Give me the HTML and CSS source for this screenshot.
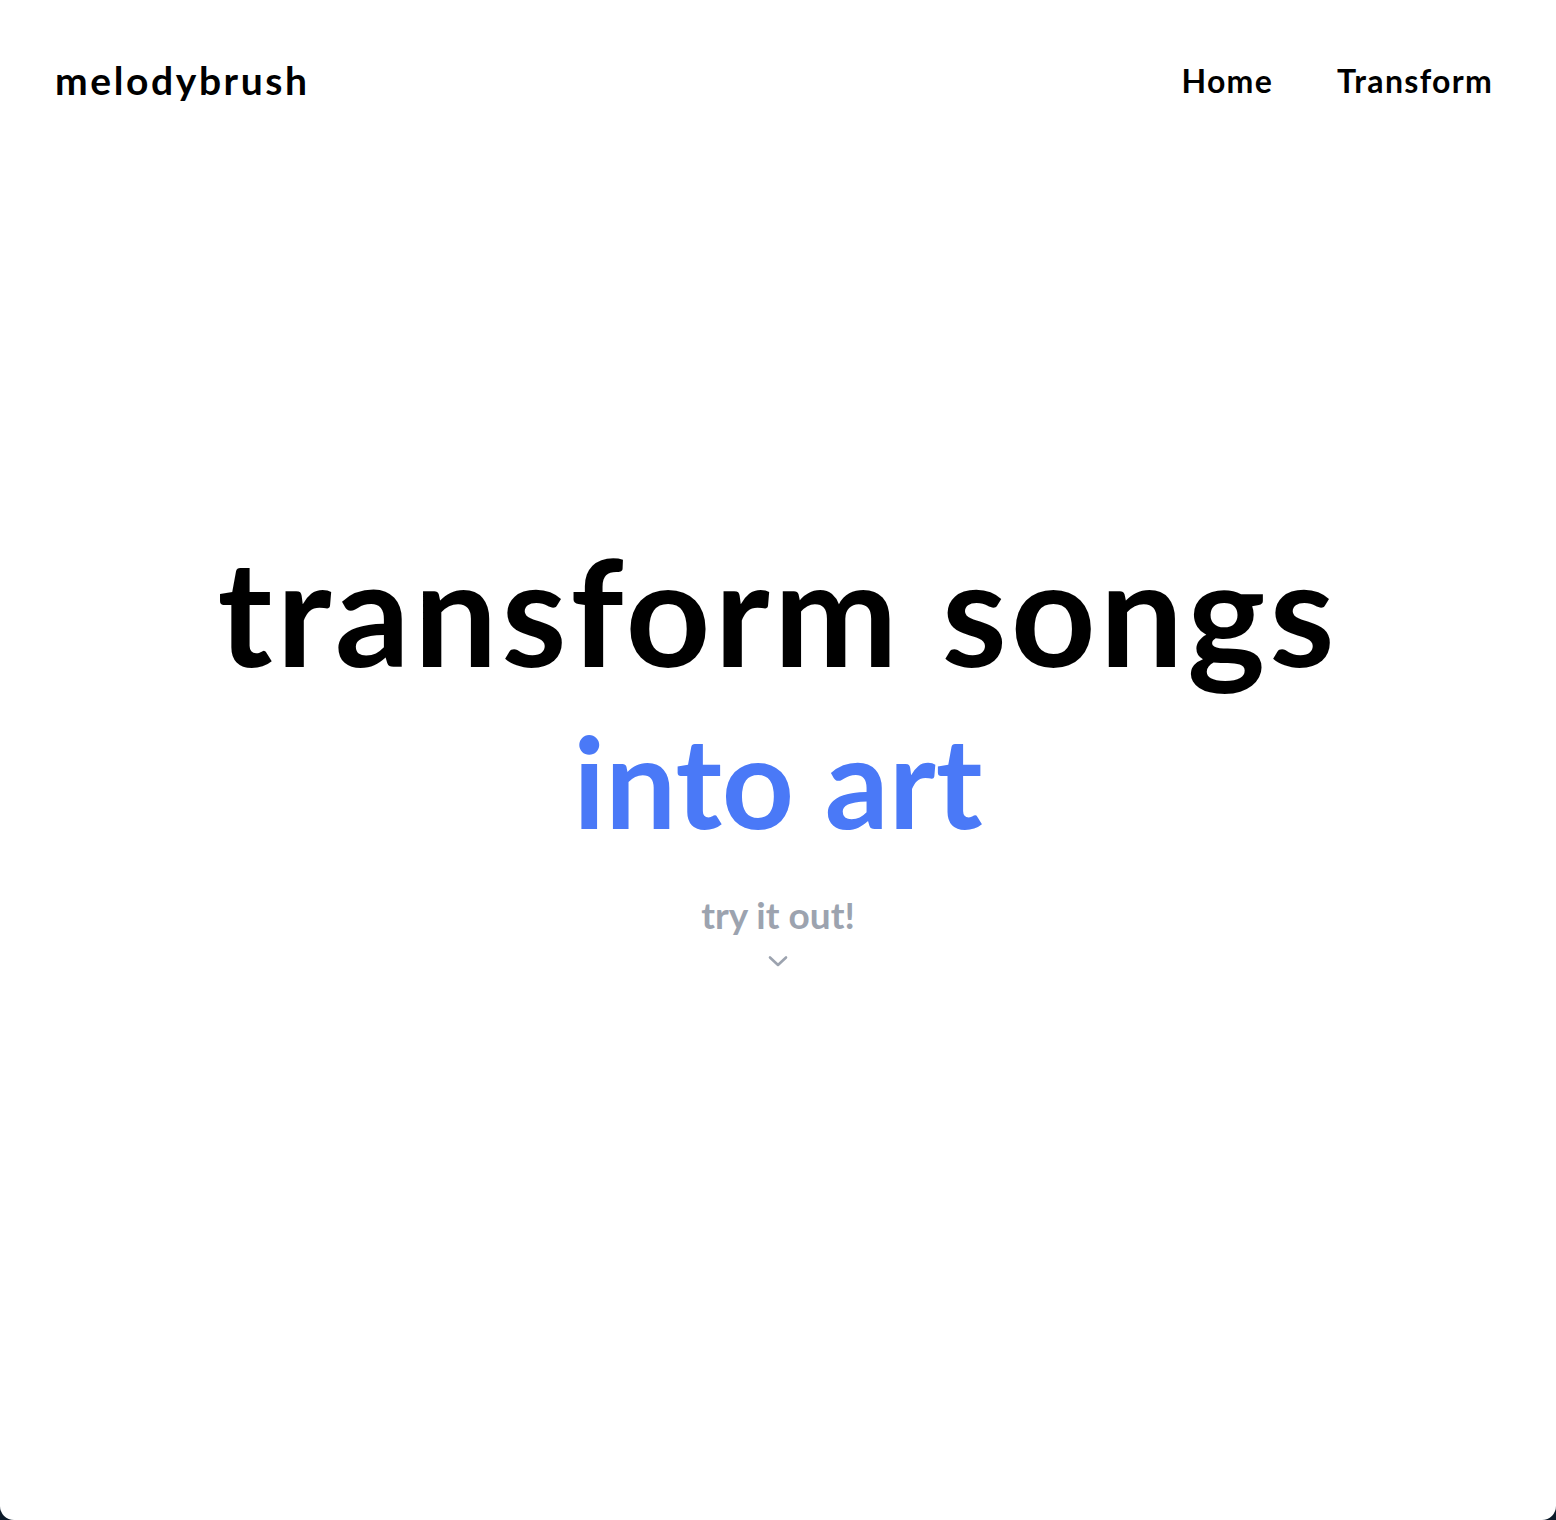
FILE: index.html
```html
<!DOCTYPE html>
<html lang="en">
<head>
<meta charset="utf-8">
<title>melodybrush</title>
<link rel="stylesheet" href="styles.css">
</head>
<body>
<div class="page">
  <header class="header">
    <a class="logo" href="#">melodybrush</a>
    <nav class="nav">
      <a href="#">Home</a>
      <a href="#">Transform</a>
    </nav>
  </header>
  <main class="hero">
    <h1 class="title">transform songs</h1>
    <h2 class="subtitle">into art</h2>
    <a class="cta" href="#">
      <span>try it out!</span>
      <svg class="chev" width="22" height="12" viewBox="0 0 22 12" fill="none" stroke="currentColor" stroke-width="2.6" stroke-linecap="round" stroke-linejoin="round"><path d="M3 2.5l8 7.5 8-7.5"/></svg>
    </a>
  </main>
</div>
</body>
</html>
```
FILE: styles.css
```css
html, body {
  margin: 0;
  padding: 0;
  background: #0d1b2a;
}
body {
  font-family: "Lato", "Noto Sans", sans-serif;
}
.page {
  background: #ffffff;
  min-height: 1520px;
  border-radius: 0 0 14px 14px;
  display: flex;
  flex-direction: column;
}
a { text-decoration: none; color: inherit; }
.header {
  display: flex;
  justify-content: space-between;
  align-items: center;
  padding: 56px 63px 0 55px;
  height: 48px;
}
.logo {
  font-size: 39px;
  font-weight: 700;
  color: #000;
  letter-spacing: 2.6px;
}
.nav {
  display: flex;
  gap: 64px;
}
.nav a {
  font-size: 32px;
  font-weight: 700;
  color: #000;
  letter-spacing: 1.3px;
}
.hero {
  display: flex;
  flex-direction: column;
  align-items: center;
  padding-top: 432px;
}
.title {
  margin: 0;
  font-size: 148px;
  font-weight: 700;
  line-height: 1;
  color: #000;
  letter-spacing: 4px;
}
.subtitle {
  margin: 34px 0 0;
  font-size: 126px;
  font-weight: 700;
  line-height: 1;
  color: #4a79f7;
}
.cta {
  margin-top: 48px;
  display: flex;
  flex-direction: column;
  align-items: center;
  color: #9ca3af;
  font-size: 37px;
  font-weight: 700;
}
.chev { margin-top: 18px; }
```
